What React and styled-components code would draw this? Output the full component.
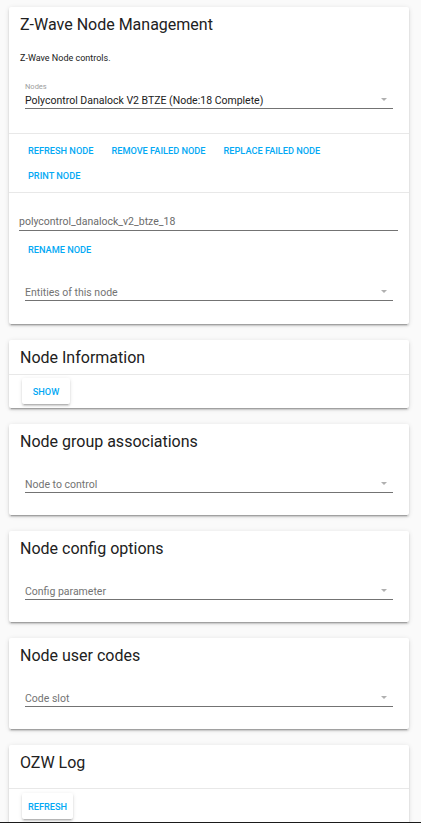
import React from "react";
import styled, { createGlobalStyle } from "styled-components";

const GlobalStyle = createGlobalStyle`
  html, body {
    margin: 0;
    padding: 0;
    background: #fafafa;
  }
  body {
    font-family: Roboto, "Noto Sans", "Liberation Sans", sans-serif;
    color: #212121;
  }
  * {
    box-sizing: border-box;
  }
`;

export default function App() {
  return (
    <>
      <GlobalStyle />
      <Page>
        <Card>
          <CardHeader>Z-Wave Node Management</CardHeader>
          <Section pad="10px 0 24px">
            <Description>Z-Wave Node controls.</Description>
            <Dropdown
              top="17px"
              label="Nodes"
              value="Polycontrol Danalock V2 BTZE (Node:18 Complete)"
            />
          </Section>
          <Section divided pad="4px 16px 4px 13px">
            <ButtonRow>
              <FlatButton>Refresh Node</FlatButton>
              <FlatButton>Remove Failed Node</FlatButton>
              <FlatButton>Replace Failed Node</FlatButton>
              <FlatButton>Print Node</FlatButton>
            </ButtonRow>
          </Section>
          <Section divided pad="21px 0 23px">
            <TextField>polycontrol_danalock_v2_btze_18</TextField>
            <ButtonRow inset="13px" top="6px">
              <FlatButton>Rename Node</FlatButton>
            </ButtonRow>
            <Dropdown top="22px" placeholder="Entities of this node" />
          </Section>
        </Card>

        <Card>
          <CardHeader>Node Information</CardHeader>
          <Section divided pad="3px 13px 4px">
            <RaisedButton>Show</RaisedButton>
          </Section>
        </Card>

        <Card>
          <CardHeader>Node group associations</CardHeader>
          <Section pad="18px 0 22px">
            <Dropdown placeholder="Node to control" />
          </Section>
        </Card>

        <Card>
          <CardHeader>Node config options</CardHeader>
          <Section pad="18px 0 22px">
            <Dropdown placeholder="Config parameter" />
          </Section>
        </Card>

        <Card>
          <CardHeader>Node user codes</CardHeader>
          <Section pad="18px 0 22px">
            <Dropdown placeholder="Code slot" />
          </Section>
        </Card>

        <Card>
          <CardHeader>OZW Log</CardHeader>
          <Section pad="9px 0 0" />
          <Section divided pad="4px 13px 40px">
            <RaisedButton>Refresh</RaisedButton>
          </Section>
        </Card>
      </Page>
      <BottomEdge />
    </>
  );
}

const Dropdown = ({ label, value, placeholder, top }) => (
  <DropdownField top={top}>
    {label && <FieldLabel>{label}</FieldLabel>}
    <DropdownValue muted={!value}>
      <span>{value || placeholder}</span>
      <Caret />
    </DropdownValue>
  </DropdownField>
);

const Page = styled.div`
  display: flex;
  flex-direction: column;
  gap: 16px;
  padding: 7px 12px 0 9px;
`;

const Card = styled.div`
  background: #fff;
  border-radius: 2px;
  box-shadow: 0 2px 2px 0 rgba(0, 0, 0, 0.14), 0 1px 5px 0 rgba(0, 0, 0, 0.12),
    0 3px 1px -2px rgba(0, 0, 0, 0.2);
`;

const CardHeader = styled.div`
  height: 34px;
  padding: 0 11px;
  display: flex;
  align-items: center;
  font-size: 16px;
  font-weight: 400;
  color: #212121;
`;

const Section = styled.div`
  padding: ${props => props.pad || "0"};
  border-top: ${props => (props.divided ? "1px solid #e8e8e8" : "none")};
`;

const Description = styled.div`
  padding: 0 11px;
  font-size: 9px;
  line-height: 14px;
  color: #212121;
`;

const DropdownField = styled.div`
  margin: ${props => props.top || "0"} 16px 0;
  border-bottom: 1px solid #737373;
`;

const FieldLabel = styled.div`
  font-size: 7.5px;
  line-height: 10px;
  color: #9e9e9e;
`;

const DropdownValue = styled.div`
  display: flex;
  align-items: center;
  justify-content: space-between;
  height: 16px;
  font-size: 10.5px;
  color: ${props => (props.muted ? "#737373" : "#212121")};
  white-space: nowrap;
`;

const Caret = styled.i`
  width: 0;
  height: 0;
  margin-right: 6px;
  margin-top: -1px;
  border-left: 3px solid transparent;
  border-right: 3px solid transparent;
  border-top: 3px solid #b0b0b0;
`;

const TextField = styled.div`
  margin: 0 11px 0 10px;
  height: 17px;
  line-height: 16px;
  font-size: 10.5px;
  color: #6b6b6b;
  border-bottom: 1px solid #737373;
`;

const ButtonRow = styled.div`
  display: flex;
  flex-wrap: wrap;
  column-gap: 6px;
  padding: 0 ${props => props.inset || "0"};
  margin-top: ${props => props.top || "0"};
`;

const FlatButton = styled.button`
  height: 25px;
  min-width: 48px;
  padding: 0 6px;
  border: none;
  background: transparent;
  font-family: inherit;
  font-size: 9.2px;
  font-weight: 500;
  text-transform: uppercase;
  color: #03a9f4;
  cursor: pointer;
`;

const RaisedButton = styled(FlatButton)`
  height: 26px;
  background: #fff;
  border-radius: 2px;
  box-shadow: 0 2px 2px 0 rgba(0, 0, 0, 0.14), 0 1px 4px 0 rgba(0, 0, 0, 0.1),
    0 3px 1px -2px rgba(0, 0, 0, 0.12);
`;

const BottomEdge = styled.div`
  position: fixed;
  left: 0;
  right: 0;
  bottom: 0;
  height: 1px;
  background: #1a1a1a;
`;
